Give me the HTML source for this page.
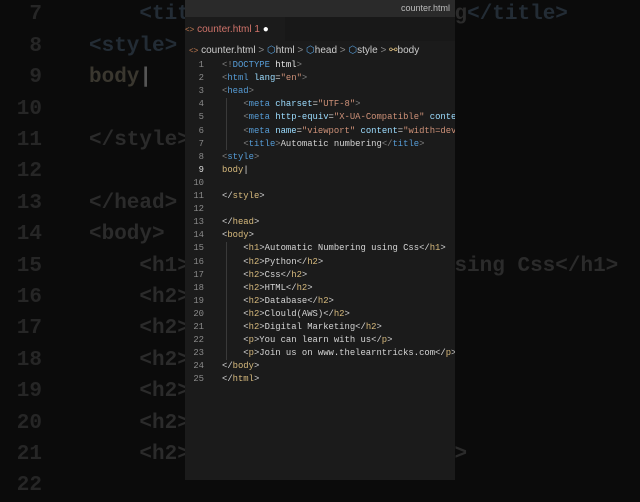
<!DOCTYPE html>
<html><head><style>
body{margin:0;width:640px;height:480px;overflow:hidden;background:#0b0b0b;position:relative;font-family:"Liberation Mono",monospace}
.bg{position:absolute;left:0;top:-189px;font-size:21px;line-height:31.4px;white-space:pre;color:#2b2b2b;font-weight:bold}
.bg .n{position:absolute;left:0;width:42px;text-align:right;color:#262626}
.bg .c{position:absolute;left:89px}
.bg .t{color:#232c35}
.main{position:absolute;left:185px;top:0;width:270px;height:480px;background:#1b1b1b;overflow:hidden}
.title{height:17px;background:#2a2a2a;color:#bbb;font:9px "Liberation Sans",sans-serif;text-align:right;padding-right:5px;line-height:17px;white-space:nowrap}
.tabs{height:24px;background:#181818;position:relative}
.tab{position:absolute;left:0;top:0;height:24px;width:100px;background:#1b1b1b;font:10px "Liberation Sans",sans-serif;color:#d0736a;line-height:26px;white-space:nowrap}
.crumb{height:17px;font:10px "Liberation Sans",sans-serif;color:#ccc;line-height:19px;white-space:nowrap;padding-left:4px}
.code{position:absolute;top:59px;left:0;font-size:8.9px;line-height:13.1px;white-space:pre;color:#d4d4d4}
.code .n{position:absolute;left:0;width:19px;text-align:right;color:#8a8a8a}
.code .c{position:absolute;left:37px}
.p{color:#808080}.k{color:#569cd6}.a{color:#9cdcfe}.s{color:#ce9178}.y{color:#d7ba7d}.w{color:#e8e8e8}
.guide{position:absolute;left:41px;width:1px;background:#3a3a3a}
</style></head><body>
<div class="bg">
<div class="n" style="top:188.4px">7</div><div class="c" style="top:188.4px">    <span class="t">&lt;title&gt;</span>Automatic numbering<span class="t">&lt;/title&gt;</span></div>
<div class="n" style="top:219.8px">8</div><div class="c t" style="top:219.8px">&lt;style&gt;</div>
<div class="n" style="top:251.2px">9</div><div class="c" style="top:251.2px;color:#3a372f">body<span style="color:#555">|</span></div>
<div class="n" style="top:282.6px">10</div>
<div class="n" style="top:314px">11</div><div class="c" style="top:314px">&lt;/style&gt;</div>
<div class="n" style="top:345.4px">12</div>
<div class="n" style="top:376.8px">13</div><div class="c" style="top:376.8px">&lt;/head&gt;</div>
<div class="n" style="top:408.2px">14</div><div class="c" style="top:408.2px">&lt;body&gt;</div>
<div class="n" style="top:439.6px">15</div><div class="c" style="top:439.6px">    &lt;h1&gt;Automatic Numbering using Css&lt;/h1&gt;</div>
<div class="n" style="top:471px">16</div><div class="c" style="top:471px">    &lt;h2&gt;Python&lt;/h2&gt;</div>
<div class="n" style="top:502.4px">17</div><div class="c" style="top:502.4px">    &lt;h2&gt;Css&lt;/h2&gt;</div>
<div class="n" style="top:533.8px">18</div><div class="c" style="top:533.8px">    &lt;h2&gt;HTML&lt;/h2&gt;</div>
<div class="n" style="top:565.2px">19</div><div class="c" style="top:565.2px">    &lt;h2&gt;Database&lt;/h2&gt;</div>
<div class="n" style="top:596.6px">20</div><div class="c" style="top:596.6px">    &lt;h2&gt;Clould(AWS)&lt;/h2&gt;</div>
<div class="n" style="top:628px">21</div><div class="c" style="top:628px">    &lt;h2&gt;Digital Marketing&lt;/h2&gt;</div>
<div class="n" style="top:659.4px">22</div>
</div>
<div class="main">
<div class="title">counter.html</div>
<div class="tabs"><div class="tab"><span style="color:#c07a50;font-size:8px">&lt;&gt;</span> counter.html 1 <span style="color:#fff">●</span></div></div>
<div class="crumb"><span style="color:#c07a50;font-size:8px">&lt;&gt;</span> counter.html <span style="color:#888">&gt;</span> <span class="k">⬡</span>html <span style="color:#888">&gt;</span> <span class="k">⬡</span>head <span style="color:#888">&gt;</span> <span class="k">⬡</span>style <span style="color:#888">&gt;</span> <span class="y">⚯</span>body</div>
<div class="guide" style="top:98px;height:52px"></div>
<div class="guide" style="top:242px;height:118px"></div>
<div class="code">
<div class="n" style="top:0">1</div><div class="c" style="top:0"><span class="p">&lt;!</span><span class="k">DOCTYPE</span> <span class="w">html</span><span class="p">&gt;</span></div>
<div class="n" style="top:13.1px">2</div><div class="c" style="top:13.1px"><span class="p">&lt;</span><span class="k">html</span> <span class="a">lang</span>=<span class="s">"en"</span><span class="p">&gt;</span></div>
<div class="n" style="top:26.2px">3</div><div class="c" style="top:26.2px"><span class="p">&lt;</span><span class="k">head</span><span class="p">&gt;</span></div>
<div class="n" style="top:39.3px">4</div><div class="c" style="top:39.3px">    <span class="p">&lt;</span><span class="k">meta</span> <span class="a">charset</span>=<span class="s">"UTF-8"</span><span class="p">&gt;</span></div>
<div class="n" style="top:52.4px">5</div><div class="c" style="top:52.4px">    <span class="p">&lt;</span><span class="k">meta</span> <span class="a">http-equiv</span>=<span class="s">"X-UA-Compatible"</span> <span class="a">content</span></div>
<div class="n" style="top:65.5px">6</div><div class="c" style="top:65.5px">    <span class="p">&lt;</span><span class="k">meta</span> <span class="a">name</span>=<span class="s">"viewport"</span> <span class="a">content</span>=<span class="s">"width=device</span></div>
<div class="n" style="top:78.6px">7</div><div class="c" style="top:78.6px">    <span class="p">&lt;</span><span class="k">title</span><span class="p">&gt;</span>Automatic numbering<span class="p">&lt;/</span><span class="k">title</span><span class="p">&gt;</span></div>
<div class="n" style="top:91.7px">8</div><div class="c" style="top:91.7px"><span class="p">&lt;</span><span class="k">style</span><span class="p">&gt;</span></div>
<div class="n" style="top:104.8px;color:#ddd">9</div><div class="c y" style="top:104.8px">body<span style="color:#ddd">|</span></div>
<div class="n" style="top:117.9px">10</div>
<div class="n" style="top:131px">11</div><div class="c" style="top:131px">&lt;/<span class="y">style</span>&gt;</div>
<div class="n" style="top:144.1px">12</div>
<div class="n" style="top:157.2px">13</div><div class="c" style="top:157.2px">&lt;/<span class="y">head</span>&gt;</div>
<div class="n" style="top:170.3px">14</div><div class="c" style="top:170.3px">&lt;<span class="y">body</span>&gt;</div>
<div class="n" style="top:183.4px">15</div><div class="c" style="top:183.4px">    &lt;<span class="y">h1</span>&gt;Automatic Numbering using Css&lt;/<span class="y">h1</span>&gt;</div>
<div class="n" style="top:196.5px">16</div><div class="c" style="top:196.5px">    &lt;<span class="y">h2</span>&gt;Python&lt;/<span class="y">h2</span>&gt;</div>
<div class="n" style="top:209.6px">17</div><div class="c" style="top:209.6px">    &lt;<span class="y">h2</span>&gt;Css&lt;/<span class="y">h2</span>&gt;</div>
<div class="n" style="top:222.7px">18</div><div class="c" style="top:222.7px">    &lt;<span class="y">h2</span>&gt;HTML&lt;/<span class="y">h2</span>&gt;</div>
<div class="n" style="top:235.8px">19</div><div class="c" style="top:235.8px">    &lt;<span class="y">h2</span>&gt;Database&lt;/<span class="y">h2</span>&gt;</div>
<div class="n" style="top:248.9px">20</div><div class="c" style="top:248.9px">    &lt;<span class="y">h2</span>&gt;Clould(AWS)&lt;/<span class="y">h2</span>&gt;</div>
<div class="n" style="top:262px">21</div><div class="c" style="top:262px">    &lt;<span class="y">h2</span>&gt;Digital Marketing&lt;/<span class="y">h2</span>&gt;</div>
<div class="n" style="top:275.1px">22</div><div class="c" style="top:275.1px">    &lt;<span class="y">p</span>&gt;You can learn with us&lt;/<span class="y">p</span>&gt;</div>
<div class="n" style="top:288.2px">23</div><div class="c" style="top:288.2px">    &lt;<span class="y">p</span>&gt;Join us on www.thelearntricks.com&lt;/<span class="y">p</span>&gt;</div>
<div class="n" style="top:301.3px">24</div><div class="c" style="top:301.3px">&lt;/<span class="y">body</span>&gt;</div>
<div class="n" style="top:314.4px">25</div><div class="c" style="top:314.4px">&lt;/<span class="y">html</span>&gt;</div>
</div>
</div>
</body></html>
